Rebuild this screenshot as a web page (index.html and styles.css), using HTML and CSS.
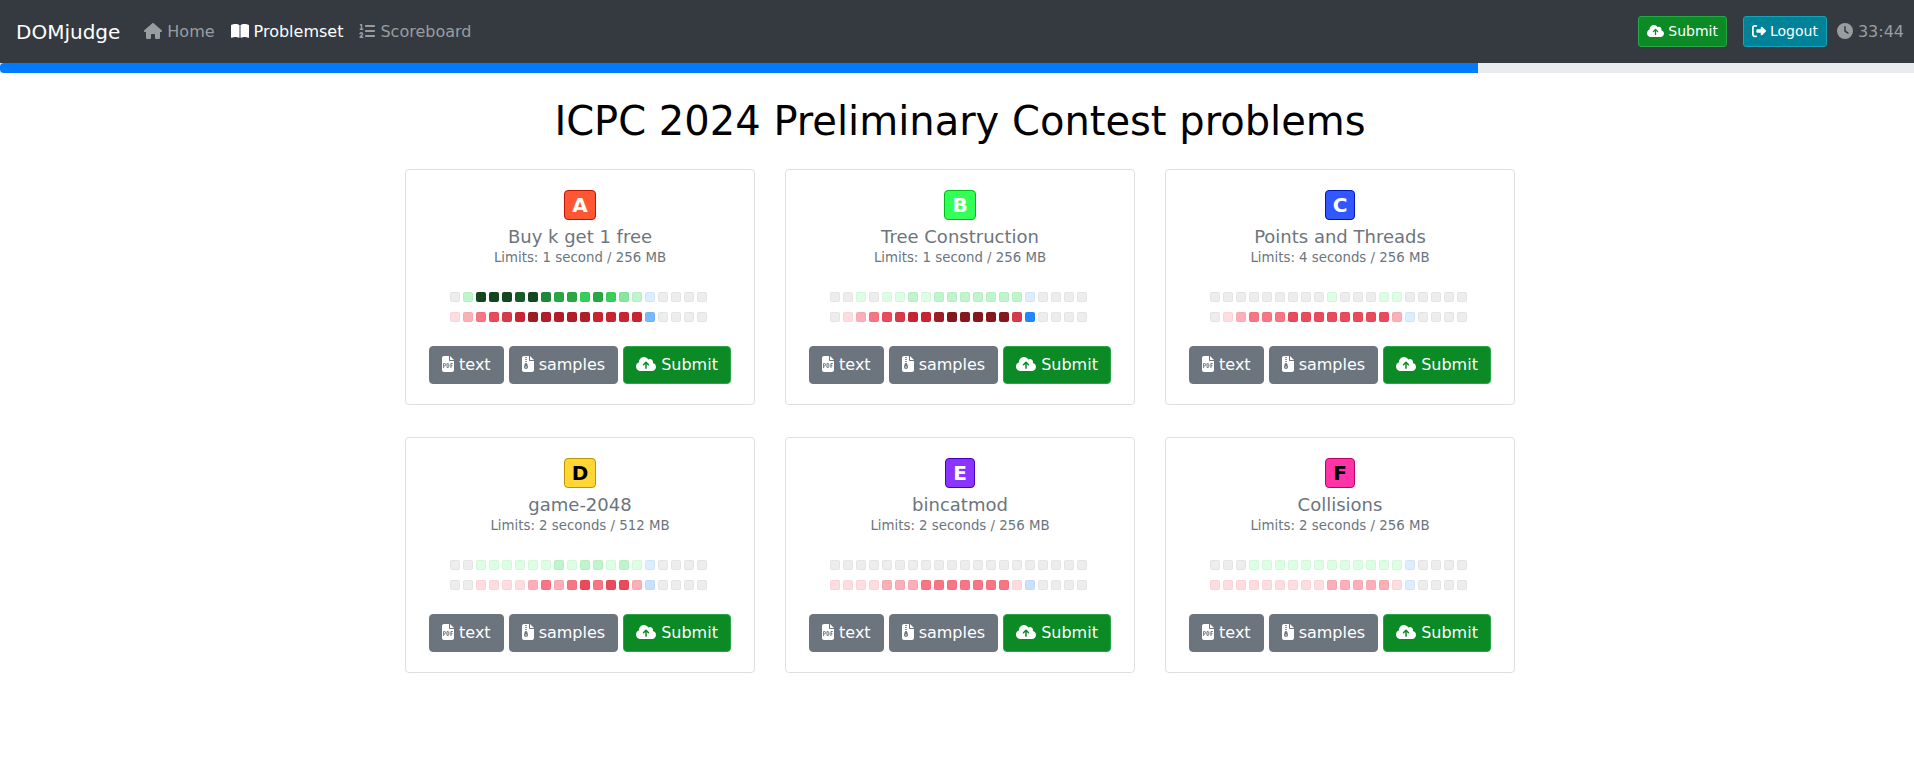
FILE: index.html
```html
<!DOCTYPE html>
<html lang="en">
<head>
<meta charset="utf-8">
<title>Problemset - DOMjudge</title>
<link rel="stylesheet" href="styles.css">
</head>
<body>
<svg class="sprite" aria-hidden="true">
  <symbol id="i-home" viewBox="0 0 576 512"><path d="M575.8 255.5c0 18-15 32.1-32 32.1h-32l.7 160.2c0 2.700-.2 5.400-.5 8.100V472c0 22.100-17.900 40-40 40H392c-22.100 0-40-17.900-40-40V384c0-17.700-14.300-32-32-32H256c-17.700 0-32 14.300-32 32v88c0 22.100-17.900 40-40 40H104c-22.100 0-40-17.900-40-40V287.600H32c-18 0-32-14-32-32.100c0-9 3-17 10-24L266.400 8c7-7 15-8 22-8s15 2 21 7L564.800 231.500c8 7 12 15 11 24z"/></symbol>
  <symbol id="i-book" viewBox="0 0 576 512"><path d="M249.600 471.500c10.800 3.800 22.400-4.100 22.400-15.500V78.600c0-4.200-1.600-8.400-5-11C247.400 52 202.400 32 144 32C93.500 32 46.300 45.300 18.100 56.100C6.800 60.500 0 71.700 0 83.800V454.100c0 11.900 12.800 20.200 24.100 16.500C55.600 460.100 105.500 448 144 448c33.900 0 79 14 105.600 23.500zm76.800 0C353 462 398.100 448 432 448c38.500 0 88.400 12.100 119.900 22.600c11.300 3.800 24.100-4.600 24.100-16.500V83.800c0-12.100-6.800-23.300-18.100-27.600C529.700 45.300 482.500 32 432 32c-58.400 0-103.400 20-123 35.600c-3.300 2.600-5 6.800-5 11V456c0 11.400 11.700 19.300 22.400 15.500z"/></symbol>
  <symbol id="i-list" viewBox="0 0 512 512"><path d="M24 56c0-13.300 10.700-24 24-24H80c13.300 0 24 10.700 24 24V176h16c13.300 0 24 10.700 24 24s-10.700 24-24 24H40c-13.300 0-24-10.700-24-24s10.700-24 24-24H56V80H48C34.700 80 24 69.300 24 56zM86.700 341.200c-6.500-7.400-18.300-6.900-24 1.200L51.500 357.900c-7.700 10.800-22.700 13.300-33.500 5.600s-13.300-22.700-5.600-33.500l11.100-15.600c23.700-33.200 72.300-35.600 99.200-4.900c21.300 24.400 20.800 60.900-1.100 84.700L86.800 432H120c13.300 0 24 10.700 24 24s-10.700 24-24 24H32c-9.500 0-18.200-5.600-22-14.400s-2.100-18.900 4.300-25.900l72-78c5.300-5.800 5.400-14.600 .3-20.500zM224 64H480c17.700 0 32 14.300 32 32s-14.300 32-32 32H224c-17.700 0-32-14.300-32-32s14.300-32 32-32zm0 160H480c17.700 0 32 14.300 32 32s-14.300 32-32 32H224c-17.700 0-32-14.300-32-32s14.300-32 32-32zm0 160H480c17.700 0 32 14.300 32 32s-14.300 32-32 32H224c-17.700 0-32-14.300-32-32s14.300-32 32-32z"/></symbol>
  <symbol id="i-cloud" viewBox="0 0 640 512"><path d="M144 480C64.500 480 0 415.500 0 336c0-62.800 40.200-116.200 96.200-135.900c-.1-2.700-.2-5.400-.2-8.100c0-88.400 71.600-160 160-160c59.300 0 111 32.200 138.700 80.200C409.900 102 428.300 96 448 96c53 0 96 43 96 96c0 12.200-2.300 23.800-6.400 34.600C596 238.400 640 290.100 640 352c0 70.700-57.300 128-128 128H144zm79-217c-9.400 9.400-9.400 24.600 0 33.900s24.600 9.400 33.900 0l39-39V392c0 13.300 10.700 24 24 24s24-10.700 24-24V257.900l39 39c9.400 9.400 24.600 9.400 33.900 0s9.400-24.600 0-33.900l-80-80c-9.400-9.400-24.600-9.400-33.900 0l-80 80z"/></symbol>
  <symbol id="i-logout" viewBox="0 0 512 512"><path d="M377.900 105.900L500.700 228.700c7.200 7.200 11.300 17.100 11.300 27.300s-4.100 20.100-11.300 27.300L377.900 406.100c-6.400 6.400-15 9.900-24 9.900c-18.700 0-33.900-15.200-33.900-33.900l0-62.100-128 0c-17.700 0-32-14.300-32-32l0-64c0-17.700 14.300-32 32-32l128 0 0-62.100c0-18.700 15.200-33.900 33.900-33.900c9 0 17.600 3.600 24 9.900zM160 96L96 96c-17.700 0-32 14.300-32 32l0 256c0 17.700 14.300 32 32 32l64 0c17.700 0 32 14.300 32 32s-14.300 32-32 32l-64 0c-53 0-96-43-96-96L0 128C0 75 43 32 96 32l64 0c17.700 0 32 14.300 32 32s-14.300 32-32 32z"/></symbol>
  <symbol id="i-clock" viewBox="0 0 512 512"><path fill-rule="evenodd" d="M256 0a256 256 0 1 1 0 512A256 256 0 1 1 256 0zM232 120V256c0 8 4 15.500 10.700 20l96 64c11 7.400 25.900 4.400 33.300-6.700s4.400-25.900-6.700-33.300L280 243.200V120c0-13.300-10.700-24-24-24s-24 10.700-24 24z"/></symbol>
  <symbol id="i-pdf" viewBox="0 0 384 512"><path d="M64 0C28.700 0 0 28.700 0 64V448c0 35.300 28.700 64 64 64H320c35.300 0 64-28.700 64-64V160H256c-17.700 0-32-14.300-32-32V0H64zM256 0V128H384L256 0z"/><path class="cut" d="M52 384V240H84a32 38 0 0 1 0 76H52M160 240V368H184a36 40 0 0 0 36-40V280a36 40 0 0 0-36-40zM286 384V240H344M286 308H334"/></symbol>
  <symbol id="i-zip" viewBox="0 0 384 512"><path fill-rule="evenodd" d="M64 0C28.700 0 0 28.700 0 64V448c0 35.300 28.700 64 64 64H320c35.300 0 64-28.700 64-64V160H256c-17.700 0-32-14.300-32-32V0H64zM256 0V128H384L256 0zM96 48c0-8.800 7.200-16 16-16h32c8.800 0 16 7.200 16 16s-7.200 16-16 16H112c-8.800 0-16-7.200-16-16zm0 64c0-8.800 7.200-16 16-16h32c8.800 0 16 7.200 16 16s-7.200 16-16 16H112c-8.800 0-16-7.200-16-16zm0 64c0-8.800 7.200-16 16-16h32c8.800 0 16 7.200 16 16s-7.200 16-16 16H112c-8.800 0-16-7.200-16-16zm-6.300 71.800c3.700-14 16.400-23.800 30.900-23.800h14.800c14.500 0 27.200 9.700 30.900 23.800l23.500 88.200c1.400 5.400 2.100 10.900 2.100 16.400c0 35.200-28.800 63.700-64 63.700s-64-28.500-64-63.700c0-5.500 .7-11.100 2.100-16.400l23.500-88.200zM112 336c-8.800 0-16 7.200-16 16s7.200 16 16 16h32c8.800 0 16-7.200 16-16s-7.200-16-16-16H112z"/></symbol>
</svg>

<nav class="navbar">
  <a class="brand" href="#">DOMjudge</a>
  <div class="nav-links">
    <a class="nav-link" href="#"><svg class="icon icon-wide"><use href="#i-home"/></svg>Home</a>
    <a class="nav-link active" href="#"><svg class="icon icon-wide"><use href="#i-book"/></svg>Problemset</a>
    <a class="nav-link" href="#"><svg class="icon"><use href="#i-list"/></svg>Scoreboard</a>
  </div>
  <div class="nav-actions">
    <button class="btn btn-sm btn-success" type="button"><svg class="icon icon-cloud"><use href="#i-cloud"/></svg>Submit</button>
    <button class="btn btn-sm btn-info" type="button"><svg class="icon"><use href="#i-logout"/></svg>Logout</button>
    <span class="timer"><svg class="icon"><use href="#i-clock"/></svg>33:44</span>
  </div>
</nav>
<div class="progress"><div class="progress-bar" style="width: 77.2%"></div></div>

<main class="container">
  <h1>ICPC 2024 Preliminary Contest problems</h1>
  <div class="cards" id="cards"></div>
</main>

<template id="card">
  <article class="card">
    <span class="badge"></span>
    <h2 class="name"></h2>
    <p class="limits"></p>
    <div class="activity">
      <div class="cells green"></div>
      <div class="cells red"></div>
    </div>
    <div class="actions">
      <a class="btn btn-secondary" href="#"><svg class="icon icon-file"><use href="#i-pdf"/></svg>text</a>
      <a class="btn btn-secondary" href="#"><svg class="icon icon-file"><use href="#i-zip"/></svg>samples</a>
      <button class="btn btn-success" type="button"><svg class="icon icon-cloud"><use href="#i-cloud"/></svg>Submit</button>
    </div>
  </article>
</template>
<script src="problems.js"></script>
</body>
</html>
```
FILE: problems.js
```js
// Activity strings hold one character per time slot:
// 0 = none, 1-9 = intensity, a-e = pending intensity.
const problems = [
  { id: "A", name: "Buy k get 1 free", limits: "1 second / 256 MB", solved: "029998965545432a0000", failed: "123456877776666d0000" },
  { id: "B", name: "Tree Construction", limits: "1 second / 256 MB", solved: "001011212222222a0000", failed: "012345668999995e0000" },
  { id: "C", name: "Points and Threads", limits: "4 seconds / 256 MB", solved: "00000000010001100000", failed: "012333444444442a0000" },
  { id: "D", name: "game-2048", limits: "2 seconds / 512 MB", solved: "001111112122121a0000", failed: "001111232343442b0000" },
  { id: "E", name: "bincatmod", limits: "2 seconds / 256 MB", solved: "00000000000000000000", failed: "111122233333331b0000" },
  { id: "F", name: "Collisions", limits: "2 seconds / 256 MB", solved: "000111111111111a0000", failed: "111111111222221a0000" }
];

function fill(row, levels) {
  for (const level of levels) {
    const cell = document.createElement("span");
    cell.className = "cell level-" + level;
    row.append(cell);
  }
}

const template = document.getElementById("card");
for (const p of problems) {
  const card = template.content.cloneNode(true);
  const badge = card.querySelector(".badge");
  badge.textContent = p.id;
  badge.classList.add("badge-" + p.id.toLowerCase());
  card.querySelector(".name").textContent = p.name;
  card.querySelector(".limits").textContent = "Limits: " + p.limits;
  fill(card.querySelector(".green"), p.solved);
  fill(card.querySelector(".red"), p.failed);
  document.getElementById("cards").append(card);
}
```
FILE: styles.css
```css
* { box-sizing: border-box; }

body {
  margin: 0;
  background: #fff;
  color: #000;
  font: 16px/24px "DejaVu Sans", sans-serif;
}

a { color: inherit; text-decoration: none; }

.sprite { display: none; }
.icon { width: 16px; height: 16px; margin-bottom: 1px; fill: currentColor; flex: none; }
.icon-wide { width: 18px; }
.icon-file { width: 12px; }
.icon-cloud { width: 20px; }
.cut { fill: none; stroke: #6c757d; stroke-width: 32px; }

.navbar {
  display: flex;
  align-items: center;
  padding: 16px 10px 16px 16px;
  background: #343a40;
  color: #fff;
}
.brand { font-size: 20px; line-height: 30px; margin-right: 16px; }
.nav-links { display: flex; flex: 1; }
.nav-link, .timer { display: flex; align-items: center; gap: 5px; color: #9a9da0; }
.nav-link { padding: 0 8px; }
.nav-link.active { color: #fff; }
.nav-actions { display: flex; align-items: center; }
.timer { margin-left: 10px; }

.btn {
  display: inline-flex;
  align-items: center;
  gap: 5px;
  padding: 6px 12px;
  border: 1px solid #6c757d;
  border-radius: 4px;
  color: #fff;
  font: inherit;
}
.btn .icon { margin-bottom: 2px; }
.btn-secondary { background: #6c757d; }
.btn-success { background: #0b8a26; border-color: #28a745; }
.btn-info { background: #008299; border-color: #17a2b8; margin-left: 16px; }
.btn-sm { gap: 4px; padding: 4px 8px; border-radius: 3px; font-size: 14px; line-height: 21px; }
.btn-sm .icon { height: 14px; width: 14px; margin-bottom: 1px; }
.btn-sm .icon-cloud { width: 17px; }

.progress { height: 10px; background: #e9ecef; }
.progress-bar { height: 100%; background: #007bff; border-radius: 4px 0 0 4px; }

.container { max-width: 1116px; margin: 0 auto; padding-left: 6px; }

h1 { margin: 24px 0; font-size: 40px; font-weight: 400; line-height: 48px; text-align: center; }

.cards { display: grid; grid-template-columns: repeat(3, 1fr); gap: 32px 30px; }
.card {
  display: flex;
  flex-direction: column;
  align-items: center;
  padding: 20px;
  border: 1px solid #dfdfdf;
  border-radius: 4px;
}

.badge {
  padding: 0 7px;
  border: 1px solid;
  border-radius: 4px;
  font-size: 20px;
  font-weight: 700;
  line-height: 28px;
  color: #fff;
}
.badge-a { background: #ff5733; border-color: #bd1300; }
.badge-b { background: #33ff57; border-color: #00bd13; }
.badge-c { background: #3357ff; border-color: #0013bd; }
.badge-d { background: #ffd633; border-color: #bd9400; color: #000; }
.badge-e { background: #8b33ff; border-color: #4900bd; }
.badge-f { background: #ff33a8; border-color: #bd0066; color: #000; }

.name { margin: 6px 0 0; color: #6c757d; font-size: 18px; font-weight: 400; line-height: 22px; }
.limits { margin: 0; color: #6c757d; font-size: smaller; line-height: 20px; }

.activity { display: grid; gap: 10px; margin: 24px 0; }
.cells { display: flex; gap: 3px; padding-right: 3px; }
.cell { width: 10px; height: 10px; border: 1px solid rgba(27, 31, 35, 0.04); border-radius: 2px; }
.level-0 { background: #ededed; }
.level-a { background: #dbedff; }
.level-b { background: #c8e1ff; }
.level-d { background: #79b8ff; }
.level-e { background: #2188ff; }
.green .level-1 { background: #dcffe4; }
.green .level-2 { background: #bef5cb; }
.green .level-3 { background: #85e89d; }
.green .level-4 { background: #34d058; }
.green .level-5 { background: #28a745; }
.green .level-6 { background: #22863a; }
.green .level-8 { background: #165c26; }
.green .level-9 { background: #144620; }
.red .level-1 { background: #ffdce0; }
.red .level-2 { background: #fdaeb7; }
.red .level-3 { background: #f97583; }
.red .level-4 { background: #ea4a5a; }
.red .level-5 { background: #d73a49; }
.red .level-6 { background: #cb2431; }
.red .level-7 { background: #b31d28; }
.red .level-8 { background: #9e1c23; }
.red .level-9 { background: #86181d; }

.actions { display: flex; gap: 5px; }
```
